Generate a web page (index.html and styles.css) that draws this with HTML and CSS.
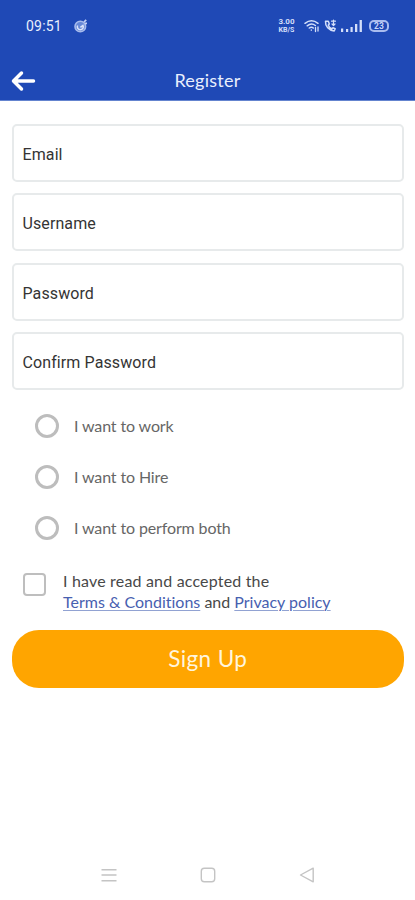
FILE: index.html
```html
<!DOCTYPE html>
<html lang="en">
<head>
<meta charset="utf-8">
<meta name="viewport" content="width=device-width, initial-scale=1">
<title>Register</title>
<link rel="stylesheet" href="styles.css">
</head>
<body>
<div class="screen">
  <header class="header">
    <div class="status">
      <span class="time">09:51</span>
      <svg class="alarm" width="16" height="16" viewBox="0 0 16 16"><circle cx="7.3" cy="8.5" r="5.3" fill="#6688d7" stroke="#a7bbec" stroke-width="1.6"/><path d="M4.6 7.5a3 3 0 1 0 5.4 0L7.4 9.4" fill="none" stroke="#dce5fb" stroke-width="1.5"/><path d="M11 4l2.2-2.2M12 5.3h2" stroke="#c3d1f5" stroke-width="1.7"/></svg>
      <span class="rate"><span>3.00</span><span>KB/S</span></span>
      <svg class="wifi" width="16" height="14" viewBox="0 0 16 14" fill="none" stroke="#d4dffa" stroke-width="1.5" stroke-linecap="round"><path d="M1 4.3Q7.5-.8 14 4.3M3.2 6.8Q7.5 3.4 11.3 6.5M5.3 9q2.2-1.6 4 0"/><path d="M7.3 10.8v.5M11.5 8.5v4M14 8v4" stroke-width="1.3"/></svg>
      <svg class="call" width="13" height="14" viewBox="0 0 13 14" fill="none" stroke="#d4dffa" stroke-width="1.5" stroke-linecap="round" stroke-linejoin="round"><path d="M1.5 2.2c-.4 5 3.4 9.5 8.7 9.8l1-2.2-2.3-1-1.3 1C5.8 9 4.7 7.6 4.3 6l1-1-1-2.8z"/><path d="M7.5 2.2h4M9.5 1v5M8 5l1.5 1.5L11 5" stroke-width="1.2"/></svg>
      <svg class="signal" width="22" height="13" viewBox="0 0 22 13" fill="#d4dffa"><path d="M0 8.5h2.2V12H0zM5 9h2.2v3H5zM9.5 7h2.2v5H9.5zM14 4h2.3v8H14zM18.600 0h2.300v12h-2.300z"/></svg>
      <span class="battery">23</span>
    </div>
    <div class="bar">
      <svg class="back" width="26" height="22" viewBox="0 0 26 22" fill="none" stroke="#fff" stroke-width="3.500" stroke-linecap="round" stroke-linejoin="round"><path d="M10.500 3L2.500 11l8 8M3 11h19.500"/></svg>
      <h1 class="title">Register</h1>
    </div>
  </header>
  <main class="form">
    <div class="field"><span>Email</span></div>
    <div class="field"><span>Username</span></div>
    <div class="field"><span>Password</span></div>
    <div class="field"><span>Confirm Password</span></div>
    <div class="options">
      <div class="option"><i class="radio"></i><span>I want to work</span></div>
      <div class="option"><i class="radio"></i><span>I want to Hire</span></div>
      <div class="option"><i class="radio"></i><span>I want to perform both</span></div>
    </div>
    <div class="terms">
      <i class="check"></i>
      <p class="agree"><span class="accept">I have read and accepted the</span><br><a>Terms &amp; Conditions</a> and <a>Privacy policy</a></p>
    </div>
    <div class="submit">Sign Up</div>
  </main>
  <nav class="nav">
    <svg width="16" height="16" viewBox="0 0 16 16" stroke="#c4c4c4" stroke-width="1.4"><path d="M.5 2.700h15M.5 8h15M.5 13.700h15"/></svg>
    <svg width="16" height="16" viewBox="0 0 16 16" fill="none" stroke="#c4c4c4" stroke-width="1.4"><rect x="1.300" y="1.300" width="13.400" height="13.400" rx="3"/></svg>
    <svg width="16" height="16" viewBox="0 0 16 16" fill="none" stroke="#c4c4c4" stroke-width="1.4" stroke-linejoin="round"><path d="M14.200 1.200v13.600L1.500 8z"/></svg>
  </nav>
</div>
</body>
</html>
```
FILE: styles.css
```css
* { box-sizing: border-box; }
body { margin: 0; background: #fff; font-family: Lato, "Liberation Sans", sans-serif; font-variant-ligatures: none; }
.screen { height: 900px; display: flex; flex-direction: column; overflow: hidden; }
.header { height: 101px; flex: none; background: #1f49b6; color: #e9effd; border-bottom: 1px solid #6484cf; }
.status { height: 52px; display: flex; align-items: center; padding-left: 26px; }
.time { width: 46px; font: 14px/20px Roboto, sans-serif; letter-spacing: .2px; }
.alarm { margin-left: 1px; }
.rate { width: 21px; margin-left: 187px; font: bold 8px/8px Roboto, sans-serif; text-align: center; color: #d4dffa; display: flex; flex-direction: column; }
.rate span { height: 8px; overflow: hidden; }
.rate span + span { font-size: 7px; }
.wifi { margin-left: 7px; }
.call { margin-left: 4px; }
.signal { margin-left: 4px; }
.battery { width: 20px; height: 12px; margin-left: 6px; border: 2px solid #a9bcef; border-radius: 5px; font: bold 8.5px/8px Roboto, sans-serif; text-align: center; color: #c9d6f8; }
.bar { height: 48px; display: grid; grid-template-columns: 48px 1fr 48px; align-items: center; padding-top: 9px; }
.back { margin-left: 11px; }
.title { margin: -1px 0 0; text-align: center; font-size: 18px; font-weight: 400; line-height: 24px; letter-spacing: .25px; }
.form { padding: 23px 11px 0 11.5px; }
.field { height: 58px; margin-bottom: 11.3px; border: 2px solid #e7eaeb; border-radius: 5px; display: flex; align-items: center; padding: 4px 0 0 9px; font: 16px/20px Roboto, sans-serif; letter-spacing: .1px; color: #343434; }
.options { padding: 0 0 0 23.5px; margin-top: -1px; }
.option { height: 51.2px; display: flex; align-items: center; gap: 15px; font-size: 16px; letter-spacing: -.13px; color: #666; }
.option span { padding-bottom: 1px; }
.radio { width: 24px; height: 24px; border: 3px solid #bdbdbd; border-radius: 50%; }
.terms { display: flex; padding-left: 11.5px; margin-top: 16px; height: 60px; }
.check { width: 23px; height: 23px; border: 2px solid #bebebe; border-radius: 4px; margin-top: 3px; }
.agree { margin: 0 0 0 17px; font-size: 16px; line-height: 21px; color: #484848; white-space: nowrap; }
.accept { letter-spacing: .18px; }
.agree a { color: #4760b0; text-decoration: underline; text-decoration-color: #91a2d2; text-underline-offset: 2px; text-decoration-thickness: 1px; }
.submit { height: 58px; background: #ffa500; color: #fff5dd; border-radius: 27px; text-align: center; font-size: 22.5px; line-height: 58px; letter-spacing: .4px; }
.nav { height: 50px; margin-top: auto; display: flex; justify-content: center; gap: 83px; align-items: center; }
```
